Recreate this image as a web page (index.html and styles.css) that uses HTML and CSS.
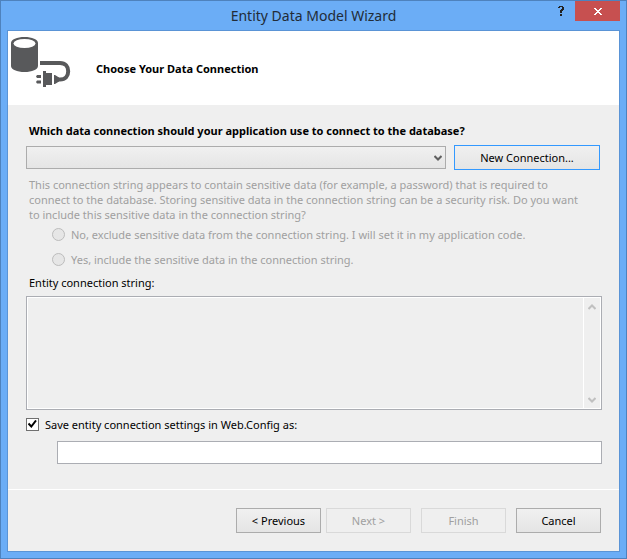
FILE: index.html
```html
<!DOCTYPE html>
<html lang="en">
<head>
<meta charset="utf-8">
<meta name="viewport" content="width=device-width, initial-scale=1">
<title>Entity Data Model Wizard</title>
<link rel="stylesheet" href="styles.css">
</head>
<body>
<div class="window">
  <header class="titlebar">
    <h1 class="title">Entity Data Model Wizard</h1>
    <div class="window-buttons">
      <button class="help" type="button" aria-label="Help">
        <svg width="6" height="10" viewBox="0 0 6 10" shape-rendering="crispEdges" fill="currentColor"><path d="M1 0h4v1h1v3h-1v1h-1v2h-2v-3h1v-1h1v-2h-2v1h-2v-1h1zM2 8h2v2h-2z"/></svg>
      </button>
      <button class="close" type="button" aria-label="Close">
        <svg width="8" height="7" viewBox="0 0 8 7" shape-rendering="crispEdges" fill="currentColor"><path d="M0 0h2v1h1v1h2v-1h1v-1h2v1h-1v1h-1v1h-1v1h1v1h1v1h1v1h-2v-1h-1v-1h-2v1h-1v1h-2v-1h1v-1h1v-1h1v-1h-1v-1h-1v-1h-1z"/></svg>
      </button>
    </div>
  </header>

  <form class="wizard">
    <div class="banner">
      <svg class="banner-icon" width="60" height="51" viewBox="0 0 60 51" aria-hidden="true">
        <path fill="#58595b" d="M0 6C0 2.500 6 0 13.500 0S27 2.500 27 6V29C27 32.500 21 35 13.500 35S0 32.500 0 29Z"/>
        <ellipse cx="13.500" cy="6.500" rx="11" ry="4.500" fill="#fff"/>
        <path d="M29 26H49C54.500 26 57.200 29.500 57.200 34.200S54.500 42.500 49 42.500H46" fill="none" stroke="#58595b" stroke-width="4"/>
        <path fill="#58595b" d="M32 34h3v2h6v12h-6v2h-3zM43 38h1l4 2.500v4L44 47h-1zM26 38h4v3h-4l-1-1.500zM26 43.500h4v3h-4l-1-1.500z"/>
      </svg>
      <h2 class="heading">Choose Your Data Connection</h2>
    </div>

    <main class="content">
      <label class="question" for="connection">Which data connection should your application use to connect to the database?</label>
      <div class="connection-row">
        <div class="select-box">
          <select id="connection"><option value=""></option></select>
          <svg class="select-arrow" width="8" height="6" viewBox="0 0 8 6" fill="none" stroke="#606060" stroke-width="2"><path d="M0.500 1L4 4.500L7.500 1"/></svg>
        </div>
        <button class="button new-connection" type="button">New Connection...</button>
      </div>

      <fieldset class="sensitive" disabled>
        <legend>This connection string appears to contain sensitive data (for example, a password) that is required to<br>connect to the database. Storing sensitive data in the connection string can be a security risk. Do you want<br>to include this sensitive data in the connection string?</legend>
        <div class="options">
          <label class="option"><input type="radio" name="sensitive">No, exclude sensitive data from the connection string. I will set it in my application code.</label>
          <label class="option"><input type="radio" name="sensitive">Yes, include the sensitive data in the connection string.</label>
        </div>
      </fieldset>

      <label class="string-label" for="string">Entity connection string:</label>
      <div class="string-box">
        <textarea id="string" readonly></textarea>
        <div class="scrollbar" aria-hidden="true">
          <svg width="8" height="6" viewBox="0 0 8 6" fill="none" stroke="#c0c0c0" stroke-width="2"><path d="M0.500 5L4 1.500L7.500 5"/></svg>
          <svg width="8" height="6" viewBox="0 0 8 6" fill="none" stroke="#c0c0c0" stroke-width="2"><path d="M0.500 1L4 4.500L7.500 1"/></svg>
        </div>
      </div>

      <div class="save">
        <span class="check-box">
          <input id="save" type="checkbox" checked>
          <svg class="check-mark" width="9" height="8" viewBox="0 0 9 8" fill="none" stroke="#000" stroke-width="2"><path d="M0.500 3.500L3.300 6.500L8 0.500"/></svg>
        </span>
        <label for="save">Save entity connection settings in Web.Config as:</label>
      </div>
      <input class="settings-name" type="text" aria-label="Connection settings name">
    </main>

    <footer class="actions">
      <button class="button previous" type="button">&lt; Previous</button>
      <button class="button next" type="button" disabled>Next &gt;</button>
      <button class="button finish" type="submit" disabled>Finish</button>
      <button class="button" type="button">Cancel</button>
    </footer>
  </form>
</div>
</body>
</html>
```
FILE: styles.css
```css
* {
  box-sizing: border-box;
}

body {
  margin: 0;
  font: 11px/15px "Noto Sans", "Open Sans", sans-serif;
  color: #000;
}

button,
input,
select,
textarea {
  margin: 0;
  font: inherit;
  color: inherit;
}

svg {
  display: block;
}

.window {
  display: flex;
  flex-direction: column;
  min-height: 100vh;
  padding: 0 6px 6px;
  border: 1px solid #4e82bd;
  background: #6badf6;
}

.titlebar {
  display: grid;
  grid-template-columns: 1fr auto 1fr;
  height: 29px;
}

.title {
  grid-column: 2;
  margin: 0;
  font-size: 14px;
  font-weight: 400;
  line-height: 30px;
  color: #222c38;
}

.window-buttons {
  display: flex;
  justify-content: flex-end;
  align-items: flex-start;
  gap: 11px;
}

.help,
.close {
  display: flex;
  align-items: center;
  justify-content: center;
  height: 20px;
  padding: 0;
  border: 0;
}

.help {
  width: 6px;
  background: none;
  color: #222;
}

.close {
  width: 45px;
  background: #c75050;
  color: #fff;
}

.wizard {
  flex: 1;
  display: flex;
  flex-direction: column;
  border: 1px solid #5a94d6;
  background: #efefef;
}

.banner {
  display: flex;
  align-items: center;
  gap: 25px;
  height: 74px;
  padding-left: 3px;
  background: #fff;
}

.banner-icon {
  align-self: flex-start;
  margin-top: 6px;
}

.heading,
.question {
  margin: 0;
  font-size: 11px;
  font-weight: 700;
}

.content {
  flex: 1;
  display: flex;
  flex-direction: column;
  padding: 18px 17px 24px 18px;
}

.question,
.string-label {
  padding-left: 3px;
}

.connection-row {
  display: flex;
  align-items: center;
  gap: 8px;
  margin-top: 7px;
  padding-right: 2px;
}

.select-box {
  position: relative;
  flex: 1;
}

.select-box select {
  display: block;
  appearance: none;
  width: 100%;
  height: 23px;
  border: 1px solid #acacac;
  border-radius: 0;
  background: linear-gradient(#f0f0f0, #e5e5e5);
}

.select-arrow {
  position: absolute;
  top: 9px;
  right: 4px;
  pointer-events: none;
}

.button {
  width: 85px;
  height: 25px;
  padding: 0;
  border: 1px solid #acacac;
  background: linear-gradient(#f0f0f0, #e5e5e5);
}

.button:disabled {
  border-color: #d9d9d9;
  background: #efefef;
  color: #a0a0a0;
}

.new-connection {
  width: 146px;
  border-color: #3399ff;
}

.sensitive {
  min-width: 0;
  margin: 7px 0 0;
  padding: 0 0 0 3px;
  border: 0;
  color: #a0a0a0;
}

.sensitive legend {
  padding: 0;
  white-space: nowrap;
}

.options {
  display: flex;
  flex-direction: column;
  gap: 10px;
  padding: 5px 0 0 23px;
}

.option {
  display: flex;
  align-items: center;
  gap: 6px;
  white-space: nowrap;
}

.option input {
  appearance: none;
  width: 13px;
  height: 13px;
  border: 1px solid #bcbcbc;
  border-radius: 50%;
  background: #e6e6e6;
}

.string-label {
  margin-top: 8px;
}

.string-box {
  display: flex;
  height: 114px;
  margin-top: 6px;
  border: 1px solid #abadb3;
  box-shadow: inset 0 0 0 1px #fff;
  padding: 1px;
}

.string-box textarea {
  flex: 1;
  min-width: 0;
  padding: 2px;
  border: 0;
  background: transparent;
  resize: none;
}

.scrollbar {
  display: flex;
  flex-direction: column;
  justify-content: space-between;
  align-items: center;
  width: 17px;
  padding: 6px 0 5px;
  border-left: 1px solid #fff;
}

.save {
  display: flex;
  align-items: center;
  gap: 6px;
  margin-top: 7px;
}

.check-box {
  position: relative;
}

.check-box input {
  display: block;
  appearance: none;
  width: 13px;
  height: 13px;
  border: 1px solid #707070;
  background: #fff;
}

.check-mark {
  position: absolute;
  top: 2px;
  left: 2px;
  pointer-events: none;
}

.check-box input:not(:checked) + .check-mark {
  display: none;
}

.settings-name {
  height: 23px;
  margin: 9px 0 0 31px;
  padding: 0 3px;
  border: 1px solid #abadb3;
  background: #fff;
}

.actions {
  display: flex;
  justify-content: flex-end;
  gap: 10px;
  padding: 18px 18px 18px 0;
  border-top: 1px solid #fff;
}

.previous {
  margin-right: -5px;
}
```
